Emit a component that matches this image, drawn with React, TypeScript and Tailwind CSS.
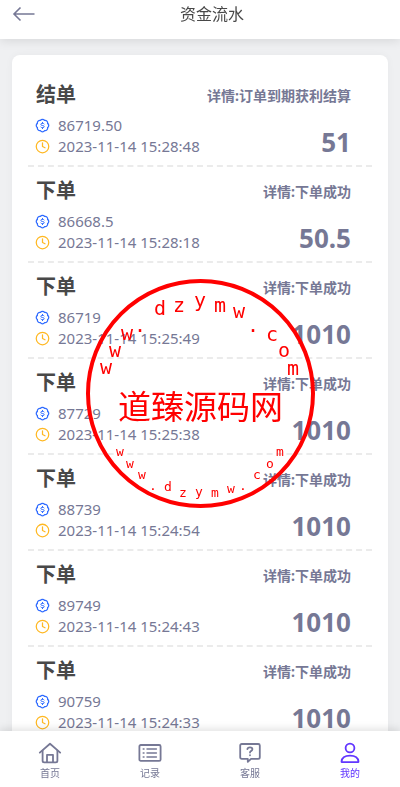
import type { ReactNode } from 'react'
import { Clock } from 'lucide-react'

type FlowRecord = {
    title: string
    detail: string
    balance: string
    time: string
    amount: string
}

const records: FlowRecord[] = [
    { title: '结单', detail: '订单到期获利结算', balance: '86719.50', time: '2023-11-14 15:28:48', amount: '51' },
    { title: '下单', detail: '下单成功', balance: '86668.5', time: '2023-11-14 15:28:18', amount: '50.5' },
    { title: '下单', detail: '下单成功', balance: '86719', time: '2023-11-14 15:25:49', amount: '1010' },
    { title: '下单', detail: '下单成功', balance: '87729', time: '2023-11-14 15:25:38', amount: '1010' },
    { title: '下单', detail: '下单成功', balance: '88739', time: '2023-11-14 15:24:54', amount: '1010' },
    { title: '下单', detail: '下单成功', balance: '89749', time: '2023-11-14 15:24:43', amount: '1010' },
    { title: '下单', detail: '下单成功', balance: '90759', time: '2023-11-14 15:24:33', amount: '1010' },
]

// letters of the stamp: glyph, centre x, baseline y
const upperArc: [string, number, number][] = [
    ['w', 106, 374], ['w', 115, 357], ['w', 127, 340], ['.', 140, 332], ['d', 160, 315],
    ['z', 179, 312], ['y', 200, 307], ['m', 220, 312], ['w', 239, 318], ['.', 253, 332],
    ['c', 272, 341], ['o', 284, 357], ['m', 293, 375],
]

const lowerArc: [string, number, number][] = [
    ['w', 120, 456], ['w', 130, 468], ['w', 142, 479], ['.', 153, 490], ['d', 168, 491],
    ['z', 183, 497], ['y', 199, 496], ['m', 215, 497], ['w', 231, 493], ['.', 243, 490],
    ['c', 257, 479], ['o', 270, 468], ['m', 280, 456],
]

function TabIcon({ children }: { children: ReactNode }) {
    return (
        <svg
            className="w-6 h-6"
            viewBox="0 0 24 24"
            fill="none"
            stroke="currentColor"
            strokeWidth="1.8"
            strokeLinecap="round"
            strokeLinejoin="round"
            aria-hidden="true"
        >
            {children}
        </svg>
    )
}

const tabs = [
    {
        label: '首页',
        active: false,
        icon: (
            <TabIcon>
                <path d="M1.8 11.6 12 2.8l10.2 8.8" />
                <path d="M4.6 9.6v10.2q0 1.6 1.6 1.6h11.6q1.6 0 1.6-1.6V9.6" />
                <path d="M9 21v-7.2h6V21" />
            </TabIcon>
        ),
    },
    {
        label: '记录',
        active: false,
        icon: (
            <TabIcon>
                <rect x="1.4" y="4" width="21.2" height="15.8" rx="1.4" />
                <path d="M5.2 8h.8M5.2 12h.8M5.2 16H6M9 8h9.4M9 12h9.4M9 16h9.4" strokeWidth="1.5" />
            </TabIcon>
        ),
    },
    {
        label: '客服',
        active: false,
        icon: (
            <TabIcon>
                <path d="M3.8 3h16.4q1.6 0 1.6 1.4v11.8q0 1.6-1.6 1.6H13l-3.2 3v-3h-6q-1.6 0-1.6-1.6V4.4Q2.2 3 3.8 3z" />
                <path d="M9.4 8.2Q9.6 6.4 12 6.4t2.4 1.8q0 1.2-1.4 1.9-1 .6-1 1.5M12 14.2v.1" />
            </TabIcon>
        ),
    },
    {
        label: '我的',
        active: true,
        icon: (
            <TabIcon>
                <circle cx="12" cy="7" r="4.4" />
                <path d="M3.9 21.2q-.4 0-.4-.6 .5-6 8.5-6t8.5 6q0 .6-.4.6z" />
            </TabIcon>
        ),
    },
]

function BalanceIcon() {
    return (
        <svg
            className="w-[15px] h-[15px] -ml-px text-[#2f6bff]"
            viewBox="0 0 24 24"
            fill="none"
            stroke="currentColor"
            strokeWidth="2"
            strokeLinecap="round"
            strokeLinejoin="round"
            aria-hidden="true"
        >
            <path d="M3.85 8.62a4 4 0 0 1 4.78-4.77 4 4 0 0 1 6.74 0 4 4 0 0 1 4.78 4.78 4 4 0 0 1 0 6.74 4 4 0 0 1-4.77 4.78 4 4 0 0 1-6.75 0 4 4 0 0 1-4.78-4.77 4 4 0 0 1 0-6.76Z" />
            <path d="M14.6 9.4Q14 8.5 12 8.5q-2.6 0-2.6 1.7T12 12t2.6 1.8T12 15.5q-2 0-2.6-.9M12 7v1.4M12 15.6V17" strokeWidth="1.6" />
        </svg>
    )
}

function RecordItem({ record }: { record: FlowRecord }) {
    return (
        <li className="flex justify-between pt-2 pb-2 pl-2 pr-[21px] border-b-2 border-dashed border-[#ebebeb]">
            <div>
                <h2 className="mb-1 text-xl leading-8 font-bold text-[#484848]">{record.title}</h2>
                <p className="flex items-center gap-2 text-[15px] leading-[21px]">
                    <BalanceIcon />
                    {record.balance}
                </p>
                <p className="flex items-center gap-2 text-[15px] leading-[21px]">
                    <Clock className="w-[15px] h-[15px] -ml-px text-[#ffb822]" />
                    {record.time}
                </p>
            </div>
            <div className="flex flex-col justify-between text-right font-bold">
                <p className="text-sm leading-[34px]">详情:{record.detail}</p>
                <p className="text-[26px] leading-[30px]">{record.amount}</p>
            </div>
        </li>
    )
}

function Stamp() {
    return (
        <div className="fixed inset-0 flex items-center justify-center pointer-events-none">
            <svg className="w-[230px] h-[229px] shrink-0" viewBox="85 279 230 229" fill="#f00" textAnchor="middle">
                <circle cx="200.5" cy="393.5" r="112.5" fill="none" stroke="#f00" strokeWidth="4" />
                <g className="text-[20px] font-['DejaVu_Sans_Mono',monospace]">
                    {upperArc.map(([char, x, y], i) => (
                        <text key={i} x={x} y={y}>{char}</text>
                    ))}
                </g>
                <text x="200.5" y="419" className="text-[33px] font-['Noto_Sans_CJK_SC',sans-serif]">道臻源码网</text>
                <g className="text-[13px] font-['DejaVu_Sans_Mono',monospace]">
                    {lowerArc.map(([char, x, y], i) => (
                        <text key={i} x={x} y={y}>{char}</text>
                    ))}
                </g>
            </svg>
        </div>
    )
}

export default function App() {
    return (
        <div className="h-screen flex flex-col bg-[#eff0f2] text-[#767895] font-['Noto_Sans','Noto_Sans_CJK_SC',sans-serif]">
            <header className="relative z-10 flex items-center px-3 pb-[11px] bg-white shadow-[0_2px_10px_rgba(0,0,0,0.1)]">
                <button type="button" aria-label="返回">
                    <svg className="w-6 h-6" viewBox="0 0 24 24" fill="none" stroke="currentColor" strokeWidth="1.6" aria-hidden="true">
                        <path d="M8.5 5.5 2 12l6.5 6.5M2 12h20.5" />
                    </svg>
                </button>
                <h1 className="flex-1 text-center text-base leading-7 text-[#484848]">资金流水</h1>
            </header>

            <main className="flex-1 min-h-0 overflow-y-auto [scrollbar-width:none] px-3 pt-4">
                <ul className="p-4 bg-white rounded-lg shadow-[0_0_8px_rgba(0,0,0,0.04)]">
                    {records.map((record) => (
                        <RecordItem key={record.time} record={record} />
                    ))}
                </ul>
            </main>

            <nav className="relative z-10 grid grid-cols-4 bg-white shadow-[0_-2px_8px_rgba(0,0,0,0.12)]">
                {tabs.map((tab) => (
                    <a
                        key={tab.label}
                        href="#"
                        aria-current={tab.active ? 'page' : undefined}
                        className={`flex flex-col items-center pt-[10px] pb-[6px] text-[10px] leading-4 ${tab.active ? 'text-[#6236ff]' : ''}`}
                    >
                        {tab.icon}
                        {tab.label}
                    </a>
                ))}
            </nav>

            <Stamp />
        </div>
    )
}
